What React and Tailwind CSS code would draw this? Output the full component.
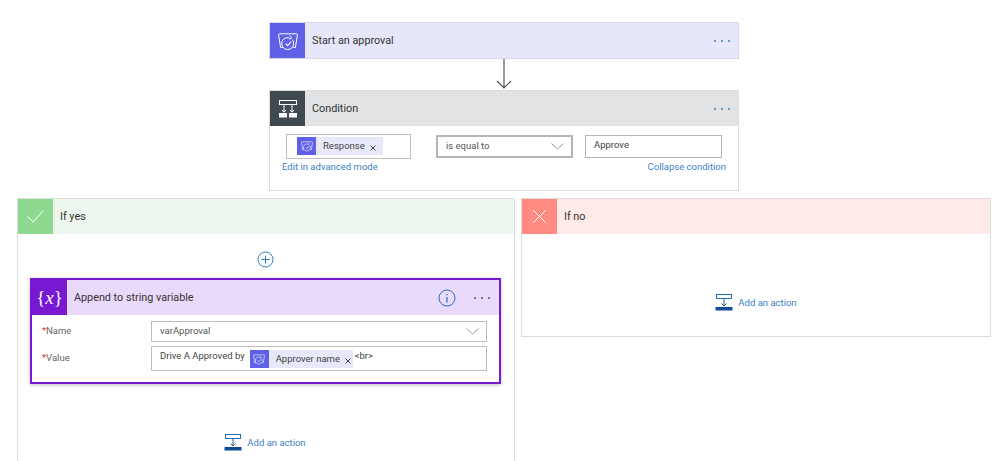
import { useState } from "react";

const font = "font-['Roboto','Open_Sans',sans-serif]";

const ApprovalIcon = ({ size = 24 }) => (
  <svg width={size} height={size} viewBox="0 0 24 24" fill="none" stroke="white" strokeWidth="1">
    <path d="M6.8 18.5H4.6L2.6 5.8c0-.7.4-1 1-1h16.8c.6 0 1 .3 1 1l-2 12.7h-2.2" />
    <path d="M16.2 10.6a6 6 0 1 1-3.2-1.9" />
    <path d="M13.6 6.4L15.8 8.7L13 10.2" />
    <path d="M9.6 14.6l2 2 3.4-3.8" strokeWidth="1.2" />
  </svg>
);

const ConditionIcon = () => (
  <svg width="20" height="18" viewBox="0 0 20 18" fill="none" stroke="white" strokeWidth="1">
    <rect x="1.5" y="0.5" width="17" height="4" />
    <path d="M6 4.5v7.5M14 4.5v7.5" />
    <path d="M4 10l2 2.2L8 10M12 10l2 2.2 2-2.2" />
    <rect x="1" y="13" width="8" height="4.5" fill="white" stroke="none" />
    <rect x="11" y="13" width="8" height="4.5" fill="white" stroke="none" />
  </svg>
);

const AddActionIcon = () => (
  <svg width="18" height="17" viewBox="0 0 18 17" fill="none">
    <rect x="1.5" y="0.5" width="15" height="4" stroke="#1f6fb8" />
    <path d="M9 4.5v7M6.5 9.5L9 12l2.5-2.5" stroke="#2b5f94" />
    <rect x="0.5" y="13" width="17" height="3.5" fill="#0f4c96" />
  </svg>
);

const Dots = ({ color = "bg-[#3d85c6]" }) => (
  <div className="flex gap-[5px]">
    <span className={`w-[2px] h-[2px] rounded-full ${color}`} />
    <span className={`w-[2px] h-[2px] rounded-full ${color}`} />
    <span className={`w-[2px] h-[2px] rounded-full ${color}`} />
  </div>
);

const Chevron = () => (
  <svg width="13" height="7" viewBox="0 0 13 7" fill="none" stroke="#999">
    <path d="M0.5 0.5L6.5 6L12.5 0.5" />
  </svg>
);

const CloseX = () => (
  <svg width="6" height="6" viewBox="0 0 6 6" fill="none" stroke="#444" className="mt-[3px]">
    <path d="M0.5 0.5L5.5 5.5M5.5 0.5L0.5 5.5" />
  </svg>
);

const Token = ({ label, className }) => (
  <div className={`flex items-center h-[18px] bg-[#e8e8fb] ${className}`}>
    <div className="w-[19px] h-[18px] bg-[#5f5fe8] flex items-center justify-center shrink-0">
      <ApprovalIcon size={14} />
    </div>
    <span className="ml-[7px] text-[9.5px] text-[#444] whitespace-nowrap">{label}</span>
    <span className="ml-[5px]">
      <CloseX />
    </span>
  </div>
);

const AddAction = ({ className }) => (
  <div className={`flex items-center justify-center gap-[5px] ${className}`}>
    <AddActionIcon />
    <span className="text-[9.5px] text-[#3b7fc4] mt-[1px]">Add an action</span>
  </div>
);

const Header = ({ icon, iconBg, bg, title, children }) => (
  <div className={`flex items-center h-[35px] ${bg}`}>
    <div className={`w-[35px] h-[35px] flex items-center justify-center shrink-0 ${iconBg}`}>{icon}</div>
    <span className="ml-[7px] mt-[2px] text-[10.8px] text-[#333] flex-1">{title}</span>
    {children}
  </div>
);

export default function App() {
  const [expanded] = useState(true);

  return (
    <div className={`w-[999px] h-[461px] overflow-hidden bg-white pt-[22px] pl-[17px] ${font}`}>
      <div className="w-[974px] flex flex-col">
        {/* Start an approval */}
        <div className="w-[470px] ml-[252px] border border-[#d9d9e8] bg-[#e7e7fb]">
          <Header
            icon={<ApprovalIcon />}
            iconBg="bg-[#5f5fe8]"
            bg="bg-[#e7e7fb]"
            title="Start an approval"
          >
            <div className="mr-[8px]">
              <Dots />
            </div>
          </Header>
        </div>

        {/* connector arrow */}
        <div className="w-[470px] ml-[252px] h-[31px] flex justify-center">
          <svg width="16" height="31" viewBox="0 0 16 31" fill="none" stroke="#555" strokeWidth="1.2">
            <path d="M8 0V29M1 22L8 29L15 22" />
          </svg>
        </div>

        {/* Condition */}
        <div className="w-[470px] h-[101px] ml-[252px] border border-[#dcdcdc]">
          <Header
            icon={<ConditionIcon />}
            iconBg="bg-[#3f4950]"
            bg="bg-[#e2e3e4]"
            title="Condition"
          >
            <div className="mr-[8px]">
              <Dots />
            </div>
          </Header>
          <div className="flex items-start pl-[16px] pt-[8px]">
            <div className="w-[125px] h-[25px] border border-[#bdbdbd] pl-[10px] pt-[2px]">
              <Token label="Response" className="w-[86px]" />
            </div>
            <div className="ml-[25px] w-[137px] h-[23px] border-2 border-[#b5b5b5] flex items-center justify-between pl-[8px] pr-[7px] mt-[1px]">
              <span className="text-[9.5px] text-[#555]">is equal to</span>
              <Chevron />
            </div>
            <div className="ml-[12px] w-[137px] h-[23px] border border-[#b5b5b5] flex items-center pl-[8px] pb-[2px] mt-[1px]">
              <span className="text-[9.5px] text-[#444]">Approve</span>
            </div>
          </div>
          <div className="flex justify-between pl-[12px] pr-[12px] mt-[1px] text-[9.5px] text-[#3b7fc4]">
            <span>Edit in advanced mode</span>
            <span>Collapse condition</span>
          </div>
        </div>

        {/* branches */}
        <div className="flex gap-[6px] mt-[7px] items-start">
          <div className="w-[498px] h-[300px] border border-[#dcdcdc]">
            <Header
              icon={
                <svg width="17" height="13" viewBox="0 0 17 13" fill="none" stroke="white">
                  <path d="M0.5 6.5L6 12L16.5 0.5" />
                </svg>
              }
              iconBg="bg-[#8cd98f]"
              bg="bg-[#eef7ee]"
              title="If yes"
            />

            <div className="flex justify-center pr-[1px] mt-[17px] h-[17px]">
              <svg width="17" height="17" viewBox="0 0 17 17" fill="none" stroke="#2a7bc4">
                <circle cx="8.5" cy="8.5" r="7.5" />
                <path d="M8.5 4.5v8M4.5 8.5h8" />
              </svg>
            </div>

            {/* Append to string variable */}
            <div className="ml-[12px] mt-[10px] w-[471px] h-[106px] border-2 border-[#7719d0] shadow-[0_1px_4px_rgba(0,0,0,0.25)]">
              <Header
                icon={
                  <span className="text-white text-[19px] leading-none font-['Liberation_Serif',serif] whitespace-nowrap">
                    {"{"}
                    <i>x</i>
                    {"}"}
                  </span>
                }
                iconBg="bg-[#7719d0]"
                bg="bg-[#e9d9fa]"
                title="Append to string variable"
              >
                <svg width="18" height="18" viewBox="0 0 18 18" fill="none" stroke="#2a6fc4" className="mr-[18px]">
                  <circle cx="9" cy="9" r="8" />
                  <path d="M9 8v5.5M9 5v1.3" strokeWidth="1.2" />
                </svg>
                <div className="mr-[9px]">
                  <Dots color="bg-[#55557a]" />
                </div>
              </Header>
              <div className="pl-[10px] pr-[12px] pt-[6px]">
                <div className="flex items-center h-[21px]">
                  <span className="w-[109px] text-[9.5px] text-[#666]">
                    <span className="text-[#d13438]">*</span>Name
                  </span>
                  <div className="flex-1 h-[21px] border border-[#bdbdbd] flex items-center justify-between pl-[8px] pr-[7px]">
                    <span className="text-[9.5px] text-[#555]">varApproval</span>
                    <Chevron />
                  </div>
                </div>
                <div className="flex items-center h-[25px] mt-[4px]">
                  <span className="w-[109px] text-[9.5px] text-[#666]">
                    <span className="text-[#d13438]">*</span>Value
                  </span>
                  <div className="flex-1 h-[25px] border border-[#bdbdbd] flex items-start pl-[8px] pt-[3px]">
                    <span className="text-[9.5px] text-[#444] mr-[5px] -mt-[1px] whitespace-nowrap">Drive A Approved by</span>
                    <Token label="Approver name" className="w-[103px]" />
                    <span className="text-[9.5px] text-[#444] ml-[2px] -mt-[1px]">{"<br>"}</span>
                  </div>
                </div>
              </div>
            </div>

            <AddAction className="mt-[50px] w-[496px] pr-[2px]" />
          </div>

          <div className="w-[470px] h-[139px] border border-[#dcdcdc]">
            <Header
              icon={
                <svg width="15" height="15" viewBox="0 0 15 15" fill="none" stroke="white">
                  <path d="M1 1L14 14M14 1L1 14" />
                </svg>
              }
              iconBg="bg-[#ff8a80]"
              bg="bg-[#ffe9e9]"
              title="If no"
            />
            {expanded && <AddAction className="mt-[60px]" />}
          </div>
        </div>
      </div>
    </div>
  );
}
